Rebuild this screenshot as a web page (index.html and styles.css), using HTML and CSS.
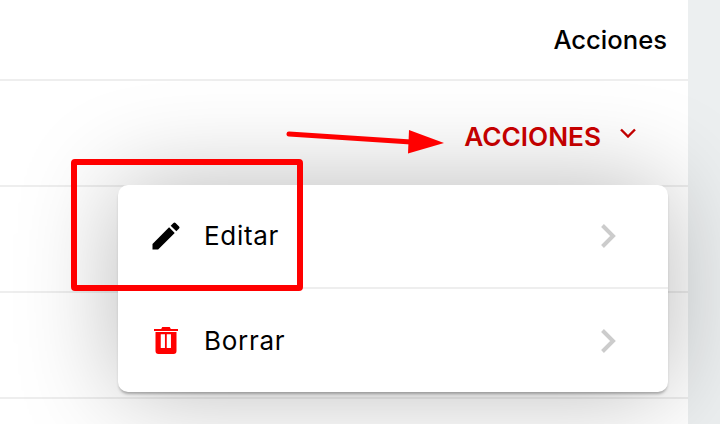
FILE: index.html
```html
<!DOCTYPE html>
<html lang="es">
<head>
  <meta charset="UTF-8">
  <title>Acciones</title>
  <link rel="stylesheet" href="styles.css">
</head>
<body>
  <div class="page">
    <main class="table">
      <div class="table-head">Acciones</div>
      <div class="table-row">
        <button class="actions-btn">
          ACCIONES
          <svg class="actions-caret" viewBox="0 0 16 10" width="16" height="10"><path d="M1 1.500l7 7 7-7" fill="none" stroke="#c80000" stroke-width="2.4"/></svg>
        </button>
      </div>
      <div class="table-row"></div>
      <div class="table-row"></div>

      <div class="menu">
        <div class="menu-item">
          <svg class="menu-icon" viewBox="0 0 24 24" width="36" height="36"><path fill="#000" d="M3 17.250V21h3.750L17.810 9.940l-3.750-3.750L3 17.250zM20.710 7.040a1 1 0 0 0 0-1.410l-2.340-2.340a1 1 0 0 0-1.410 0l-1.830 1.830 3.750 3.750 1.830-1.830z"/></svg>
          <span class="menu-label">Editar</span>
          <svg class="menu-chevron" viewBox="0 0 16 26" width="16" height="26"><path d="M2.500 2.500l10.500 10.500L2.500 23.500" fill="none" stroke="#cccccc" stroke-width="4"/></svg>
        </div>
        <div class="menu-item">
          <svg class="menu-icon" viewBox="0 0 24 24" width="36" height="36"><path fill="#f00" fill-rule="evenodd" d="M9.500 2.700h5l.7 1.300H20v1.300H4V4h4.800zM5 6h14v12.700a2 2 0 0 1-2 2H7a2 2 0 0 1-2-2zm3.500 1.500v9.200h2.800V7.500zm4 0v9.200h2.800V7.500z"/></svg>
          <span class="menu-label">Borrar</span>
          <svg class="menu-chevron" viewBox="0 0 16 26" width="16" height="26"><path d="M2.500 2.500l10.500 10.500L2.500 23.500" fill="none" stroke="#cccccc" stroke-width="4"/></svg>
        </div>
      </div>

      <div class="highlight"></div>
      <svg class="arrow" viewBox="0 0 162 30" width="162" height="30"><path d="M3 4l122 8" fill="none" stroke="#f00" stroke-width="5" stroke-linecap="round"/><path fill="#f00" d="M123 0l35 13-36 10.500z"/></svg>
    </main>
    <aside class="gutter"></aside>
  </div>
</body>
</html>
```

FILE: styles.css
```css
html, body {
  margin: 0;
  height: 100%;
  overflow: hidden;
}

body {
  font-family: Inter, "Liberation Sans", sans-serif;
  color: #000;
  background: #fff;
}

.page {
  display: flex;
  width: 720px;
  height: 424px;
  overflow: hidden;
}

.table {
  position: relative;
  width: 688px;
  flex: none;
  background: #fff;
}

.gutter {
  flex: 1;
  background: #eceff0;
}

.table-head {
  height: 81px;
  box-sizing: border-box;
  padding: 25px 21px 0 0;
  text-align: right;
  font-size: 25.600px;
  line-height: 30px;
  font-weight: 500;
  border-bottom: 2px solid #eeeeee;
}

.table-row {
  display: flex;
  justify-content: flex-end;
  align-items: flex-start;
  height: 106px;
  box-sizing: border-box;
  border-bottom: 2px solid #eeeeee;
}

.actions-btn {
  display: flex;
  align-items: center;
  gap: 19px;
  margin: 41px 52px 0 0;
  padding: 0;
  border: none;
  background: none;
  font-family: inherit;
  font-size: 26.200px;
  line-height: 30px;
  font-weight: 600;
  color: #cc0000;
}

.actions-caret {
  margin-top: -9px;
}

.menu {
  position: absolute;
  left: 118px;
  top: 185px;
  width: 550px;
  height: 207px;
  background: #fff;
  border-radius: 10px;
  box-shadow: 0 3px 3px -1px rgba(0, 0, 0, 0.3), 0 0 100px rgba(0, 0, 0, 0.28);
}

.menu-item {
  display: flex;
  align-items: center;
  height: 104px;
  box-sizing: border-box;
  padding: 0 52px 0 30px;
  border-bottom: 2px solid #eeeeee;
}

.menu-item:last-child {
  border-bottom: none;
  height: 103px;
}

.menu-icon {
  flex: none;
}

.menu-label {
  flex: 1;
  margin-left: 20px;
  font-size: 26px;
  line-height: 32px;
  letter-spacing: 0.7px;
}

.highlight {
  position: absolute;
  left: 71px;
  top: 159px;
  width: 232px;
  height: 132px;
  box-sizing: border-box;
  border: 6px solid #f00;
  border-radius: 4px;
}

.arrow {
  position: absolute;
  left: 286px;
  top: 130px;
}
```
